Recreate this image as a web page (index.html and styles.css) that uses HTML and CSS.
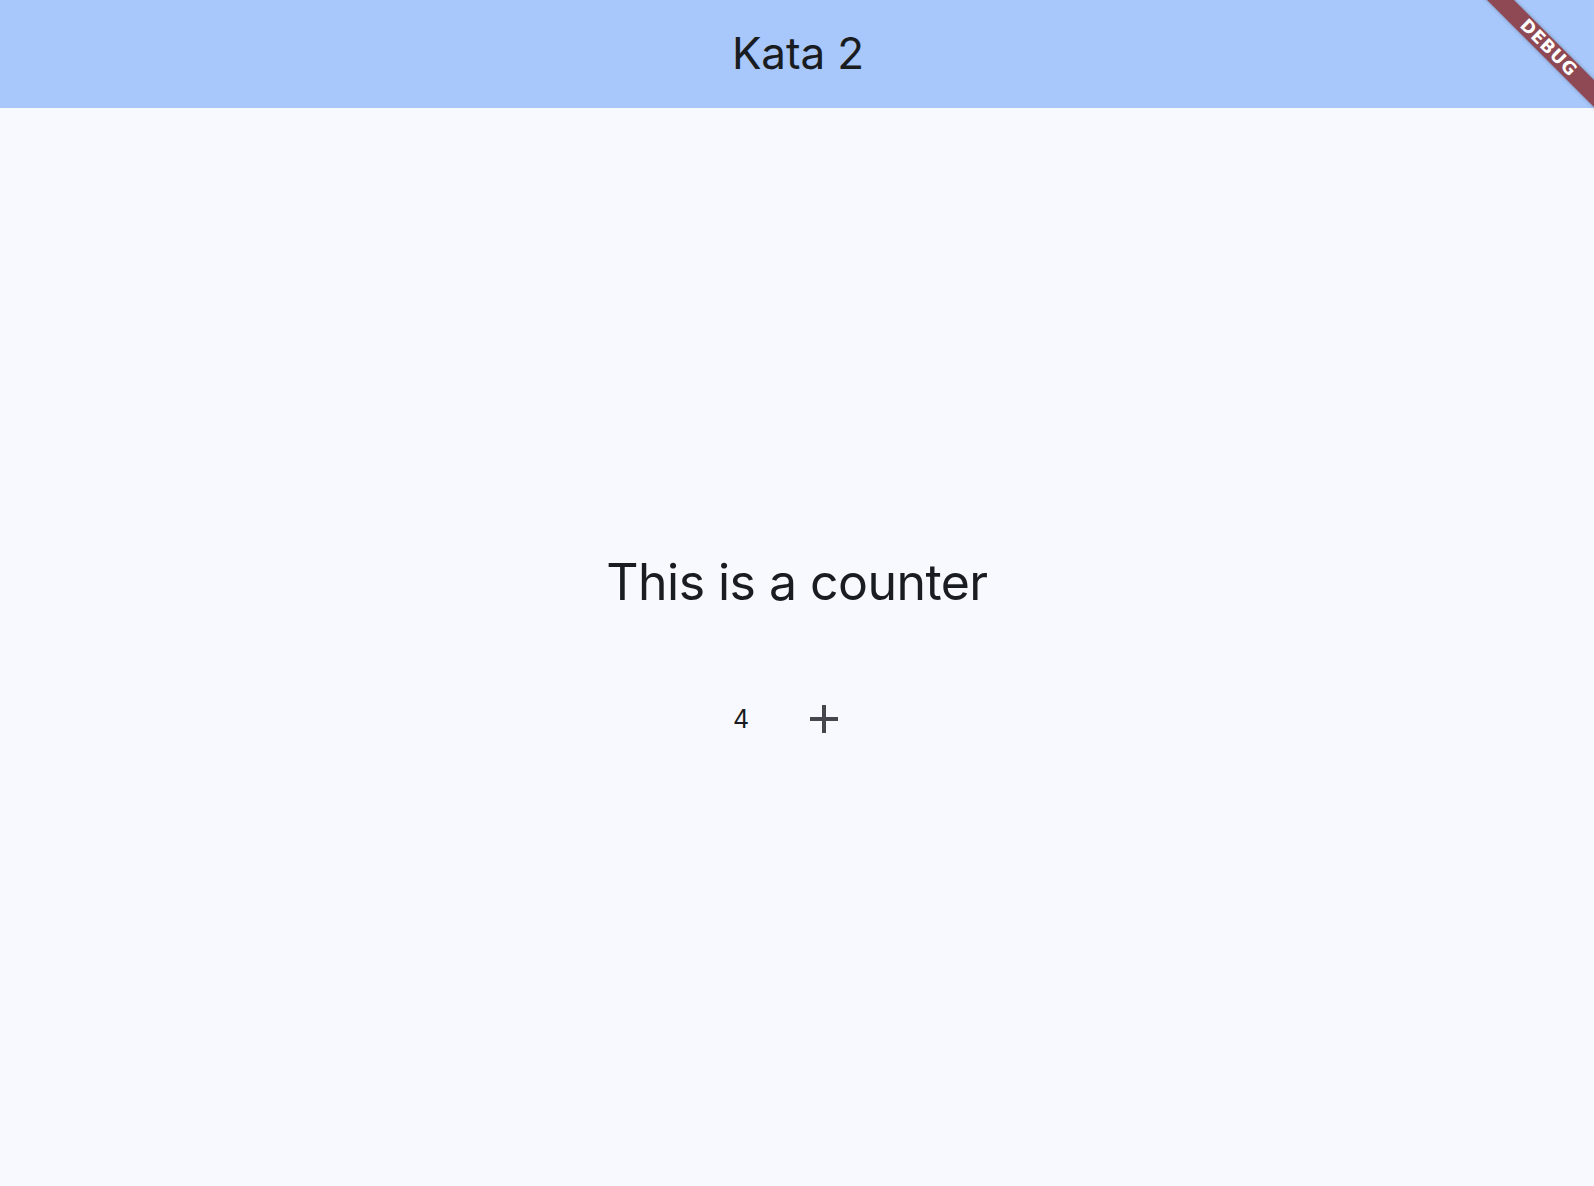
FILE: index.html
```html
<!DOCTYPE html>
<html lang="en">
<head>
<meta charset="utf-8">
<title>Kata 2</title>
<link rel="stylesheet" href="styles.css">
</head>
<body>
<div class="app">
  <header class="app-bar">
    <h1 class="app-title">Kata 2</h1>
  </header>
  <main class="content">
    <div class="counter-column">
      <p class="counter-label">This is a counter</p>
      <div class="counter-row">
        <span class="counter-value">4</span>
        <button class="icon-button" type="button" aria-label="Increment">
          <svg class="icon" viewBox="0 0 24 24" width="48" height="48" aria-hidden="true">
            <path d="M19 13h-6v6h-2v-6H5v-2h6V5h2v6h6v2z" fill="currentColor"/>
          </svg>
        </button>
      </div>
    </div>
  </main>
  <div class="debug-banner"><span class="debug-text">DEBUG</span></div>
</div>
</body>
</html>
```
FILE: styles.css
```css
html, body {
  margin: 0;
  padding: 0;
  height: 100%;
}
body {
  background: #f8f9ff;
  font-family: Inter, "Noto Sans", sans-serif;
  color: #191c20;
  overflow: hidden;
}
.app {
  position: relative;
  height: 100vh;
  display: flex;
  flex-direction: column;
  overflow: hidden;
}
.app-bar {
  height: 108px;
  flex: 0 0 108px;
  background: #a8c7fa;
  display: flex;
  align-items: center;
  justify-content: center;
  padding-bottom: 3px;
  padding-left: 2px;
  box-sizing: border-box;
}
.app-title {
  margin: 0;
  font-size: 44px;
  font-weight: 400;
  line-height: 60px;
  letter-spacing: -0.1px;
  color: #191c20;
}
.content {
  flex: 1;
  display: flex;
  align-items: center;
  justify-content: center;
  padding-top: 6px;
}
.counter-column {
  display: flex;
  flex-direction: column;
  align-items: center;
  gap: 77px;
}
.counter-label {
  margin: 0;
  font-size: 50px;
  line-height: 60px;
  font-weight: 400;
  letter-spacing: -0.55px;
}
.counter-row {
  height: 60px;
  display: flex;
  align-items: center;
  justify-content: center;
  gap: 38px;
}
.counter-value {
  font-size: 25px;
  line-height: 30px;
}
.icon-button {
  width: 74px;
  height: 60px;
  padding: 0;
  border: 0;
  background: transparent;
  color: #44474e;
  display: flex;
  align-items: center;
  justify-content: center;
  cursor: pointer;
}
.icon {
  display: block;
}
.debug-banner {
  position: absolute;
  left: 1447px;
  top: 37px;
  width: 200px;
  height: 19px;
  background: #8e4954;
  transform: rotate(45deg);
  display: flex;
  align-items: center;
  justify-content: center;
  box-shadow: 0 0 4px rgba(0, 0, 0, 0.3);
}
.debug-text {
  color: #ffffff;
  font-family: "DejaVu Sans", sans-serif;
  font-weight: 900;
  font-size: 17.5px;
  line-height: 1;
  letter-spacing: 0.8px;
  padding-left: 4px;
}
```
